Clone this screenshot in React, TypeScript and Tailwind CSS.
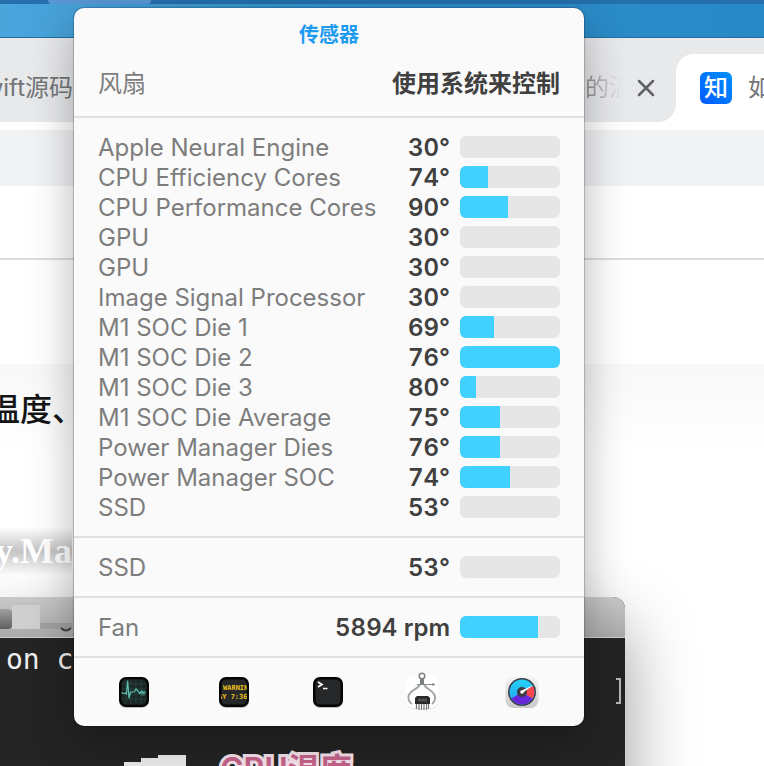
import React from "react";

type Reading = { name: string; value: string; level: number };

const sensors: Reading[] = [
  { name: "Apple Neural Engine", value: "30°", level: 0 },
  { name: "CPU Efficiency Cores", value: "74°", level: 28 },
  { name: "CPU Performance Cores", value: "90°", level: 48 },
  { name: "GPU", value: "30°", level: 0 },
  { name: "GPU", value: "30°", level: 0 },
  { name: "Image Signal Processor", value: "30°", level: 0 },
  { name: "M1 SOC Die 1", value: "69°", level: 34 },
  { name: "M1 SOC Die 2", value: "76°", level: 100 },
  { name: "M1 SOC Die 3", value: "80°", level: 16 },
  { name: "M1 SOC Die Average", value: "75°", level: 40 },
  { name: "Power Manager Dies", value: "76°", level: 40 },
  { name: "Power Manager SOC", value: "74°", level: 50 },
  { name: "SSD", value: "53°", level: 0 },
];

function Row({ name, value, level }: Reading) {
  return (
    <li className="flex h-[30px] items-center text-2xl whitespace-nowrap">
      <span className="flex-1 pt-0.5 text-[#7d7d7d]">{name}</span>
      <span className="pt-0.5 font-semibold text-[#404040] tabular-nums">{value}</span>
      <div
        role="meter"
        aria-label={name}
        aria-valuenow={level}
        aria-valuemin={0}
        aria-valuemax={100}
        className="ml-2.5 h-[22px] w-[100px] shrink-0 overflow-hidden rounded-md bg-[#e6e6e6]"
      >
        <div className="h-full bg-[#41d1ff]" style={{ width: `${level}%` }} />
      </div>
    </li>
  );
}

function Section({ rows }: { rows: Reading[] }) {
  return (
    <ul className="border-t-2 border-[#e0e0e0] px-6 py-3.5">
      {rows.map((r, i) => (
        <Row key={i} {...r} />
      ))}
    </ul>
  );
}

function AppButton({ label, children }: { label: string; children: React.ReactNode }) {
  return (
    <button type="button" aria-label={label} className="block size-9">
      <svg viewBox="0 0 36 36" className="size-9 overflow-visible">
        {children}
      </svg>
    </button>
  );
}

function DarkTile() {
  return (
    <>
      <rect x="3" y="4" width="30" height="30" rx="7" fill="#000" opacity=".25" />
      <rect x="3" y="3" width="30" height="30" rx="7" fill="#050505" />
      <rect x="5.5" y="5.5" width="25" height="25" rx="4.5" fill="#262728" />
    </>
  );
}

function ActivityIcon() {
  return (
    <AppButton label="Activity Monitor">
      <DarkTile />
      <rect x="5.5" y="5.5" width="25" height="25" rx="4.5" fill="#1b2625" />
      <path
        d="M10 6v24M15 6v24M20 6v24M25 6v24M6 10h24M6 15h24M6 20h24M6 25h24"
        stroke="#28463f"
        strokeWidth=".8"
      />
      <circle cx="27" cy="19" r="3" fill="#55c9b5" opacity=".35" />
      <path
        d="M5.500 18.500l2 1 2-.5 1 1 1.200-13 1.300 17 1.500-6h3.500l2-3 2 2 1.500 2.500 2-2 1.500 1.500 2-1"
        fill="none"
        stroke="#5fc4b4"
        strokeWidth="1.200"
        strokeLinejoin="round"
      />
    </AppButton>
  );
}

function ConsoleIcon() {
  return (
    <AppButton label="Console">
      <DarkTile />
      <svg x="5" y="5" width="26" height="26" viewBox="0 0 26 26">
        <g
          fill="#f0c31c"
          fontSize="7"
          fontWeight="700"
          style={{ fontFamily: '"DejaVu Sans Mono", monospace' }}
        >
          <text x="2" y="11">WARNIN</text>
          <text x="-3" y="20">AY 7:36</text>
        </g>
      </svg>
    </AppButton>
  );
}

function TerminalIcon() {
  return (
    <AppButton label="Terminal">
      <DarkTile />
      <path d="M8 8l4 2.500-4 2.500M13 14.500h4.500" fill="none" stroke="#fff" strokeWidth="1.700" />
    </AppButton>
  );
}

function SystemInfoIcon() {
  return (
    <AppButton label="System Information">
      <rect x="2" y="3" width="32" height="32" rx="8" fill="#000" opacity=".08" />
      <rect x="2" y="2" width="32" height="32" rx="8" fill="#fff" />
      <path
        d="M16 10c-1 5-10 6-11.500 12-.5 3 .5 6 3.500 8M20 10c1 5 9 6 11 12 .5 3-.5 6-3 8"
        fill="none"
        stroke="#a3a7a7"
        strokeWidth="2"
      />
      <circle cx="18" cy="2" r="2.800" fill="none" stroke="#808484" strokeWidth="1.500" />
      <path d="M16 4.500h4v6h-4z" fill="#7c8080" />
      <path d="M13 10.500h18M29 9v3" stroke="#858989" strokeWidth="1.200" />
      <path d="M13 22h11l2 2v6H11v-6z" fill="#292929" />
      <path d="M14 24.500h9v3h-9z" fill="#505050" />
      <path d="M12.500 30v5M15 30v6M17.500 30v6M20 30v6M22.500 30v6M24.500 30v5" stroke="#777" strokeWidth="1.200" />
    </AppButton>
  );
}

function GaugeIcon() {
  return (
    <AppButton label="iStat Menus">
      <defs>
        <linearGradient id="tile" x2="0" y2="1">
          <stop stopColor="#f6f6f6" />
          <stop offset="1" stopColor="#c9c9c9" />
        </linearGradient>
        <linearGradient id="sky" x2="0" y2="1">
          <stop stopColor="#22d3f7" />
          <stop offset="1" stopColor="#2d9df2" />
        </linearGradient>
      </defs>
      <rect x="1.500" y="2" width="33" height="32" rx="8" fill="url(#tile)" />
      <circle cx="18" cy="18" r="14" fill="#3a3d49" />
      <circle cx="18" cy="18" r="12.500" fill="url(#sky)" />
      <path d="M18 18L7.500 24.500A12.500 12.500 0 0 0 28.500 24.500z" fill="#6a26dc" />
      <path d="M18 18L29 12A12.500 12.500 0 0 1 28.500 24.500z" fill="#fb4650" />
      <circle cx="18" cy="18" r="5" fill="#3b3c41" />
      <path d="M17.200 16.800L29.500 11l-11 8z" fill="#fff" />
      <circle cx="18" cy="18" r="1.800" fill="#fff" />
    </AppButton>
  );
}

function SensorPanel() {
  return (
    <section
      aria-label="传感器"
      className="absolute top-2 left-[74px] w-[510px] rounded-[10px] bg-[#fafafa] shadow-[0_0_1px_1px_rgba(0,0,0,0.2),0_16px_44px_rgba(0,0,0,0.3)]"
    >
      <h1 className="pt-3 text-center text-xl leading-[30px] font-bold text-[#1c9bf1]">传感器</h1>
      <div className="mt-4 mb-3.5 flex h-9 items-center justify-between px-6 text-2xl">
        <span className="text-[#7d7d7d]">风扇</span>
        <button type="button" className="font-bold text-[#404040]">
          使用系统来控制
        </button>
      </div>
      <Section rows={sensors} />
      <Section rows={[{ name: "SSD", value: "53°", level: 0 }]} />
      <Section rows={[{ name: "Fan", value: "5894 rpm", level: 78 }]} />
      <nav className="flex h-[70px] items-center justify-between border-t-2 border-[#e0e0e0] pr-11 pl-[42px]">
        <ActivityIcon />
        <div className="flex gap-[58px]">
          <ConsoleIcon />
          <TerminalIcon />
          <SystemInfoIcon />
        </div>
        <GaugeIcon />
      </nav>
    </section>
  );
}

function TabStrip() {
  return (
    <div className="flex h-[84px] bg-white text-2xl whitespace-nowrap text-[#747577]">
      <div className="flex flex-1 items-center rounded-br-[18px] bg-[#e8e9eb] pt-4">
        <span className="flex w-[73px] justify-end overflow-hidden">Swift源码</span>
        <span className="ml-auto w-9 overflow-hidden bg-linear-to-r from-[#88898b] to-[#e8e9eb] bg-clip-text text-transparent">
          的温
        </span>
        <button type="button" aria-label="关闭标签页" className="mr-5 ml-[15px] block size-5">
          <svg viewBox="0 0 20 20" className="size-5">
            <path d="M3 3l14 14M17 3L3 17" stroke="#606164" strokeWidth="2.500" strokeLinecap="round" />
          </svg>
        </button>
      </div>
      <div className="w-[88px] bg-[#e8e9eb]">
        <div className="mt-4 flex h-[68px] items-center gap-4 overflow-hidden rounded-tl-[18px] bg-white pl-6">
          <span className="flex size-8 shrink-0 items-center justify-center rounded-md bg-linear-to-tr from-[#0058ff] to-[#0090ff] font-medium text-white">
            知
          </span>
          <span>如</span>
        </div>
      </div>
    </div>
  );
}

function Article() {
  return (
    <main className="bg-white">
      <div className="h-[74px] border-b-2 border-[#dddddd]" />
      <div className="h-[104px]" />
      <div className="h-[233px] bg-linear-to-b from-[#f8f8f8] to-white to-40% pt-[22px]">
        <p className="flex w-[84px] justify-end overflow-hidden text-[32px] leading-[48px] font-medium whitespace-nowrap text-[#151515]">
          温度、
        </p>
        <p
          className="mt-[93px] flex w-[72px] justify-end overflow-hidden bg-linear-to-b from-white via-[#c4c4c4] to-white text-4xl leading-[48px] font-bold text-white"
          style={{ fontFamily: '"Liberation Serif", serif' }}
        >
          y.Ma
        </p>
      </div>
      <div className="mr-[139px] h-[240px] rounded-tr-xl bg-[#242424] shadow-[0_30px_70px_rgba(0,0,0,0.4)]">
        <div className="flex h-[41px] items-end rounded-tr-xl border-b border-[#d0d0d0] bg-linear-to-b from-[#c8c8c8] to-[#aaaaaa] pb-2">
          <div className="h-5 w-3 rounded-r-sm bg-linear-to-b from-[#a0a0a0] to-[#606060]" />
          <div className="h-6 w-7 bg-[#cfcfcf]" />
          <div className="h-1.5 w-8 bg-[#a0a0a0]" />
          <svg viewBox="0 0 12 6" className="-mb-1 -ml-3 h-1.5 w-3">
            <path d="M1 1q5 5 10 0" fill="none" stroke="#444" strokeWidth="2" />
          </svg>
        </div>
        <div
          className="flex h-[112px] justify-between pt-1.5 pl-1.5 text-[28px] leading-[32px] whitespace-pre text-[#eeeeee]"
          style={{ fontFamily: '"DejaVu Sans Mono", monospace' }}
        >
          <span>on c</span>
          <span className="mt-[34px] mr-1 h-[26px] w-[5px] border-2 border-l-0 border-[#b5b5b5]" />
        </div>
        <div className="flex pl-[124px]">
          <svg viewBox="0 0 62 20" className="mt-[5px] h-5 w-[62px]">
            <path d="M0 20V7h17V3h17V0h28v20z" fill="#ededed" />
          </svg>
          <span className="ml-[34px] text-[32px] leading-10 font-semibold whitespace-nowrap text-[#c7648b] [-webkit-text-stroke:6px_#f8e6ee] [paint-order:stroke_fill]">
            CPU温度
          </span>
        </div>
      </div>
    </main>
  );
}

export default function App() {
  return (
    <div
      className="relative h-screen overflow-hidden bg-white"
      style={{ fontFamily: 'Inter, "Noto Sans CJK SC", sans-serif' }}
    >
      <header className="h-[38px] border-b border-[#256d9f] bg-linear-to-r from-[#4ba5dc] via-[#2f8fcb] to-[#2789c6]">
        <div className="h-1 bg-[#246fac] pl-12">
          <div className="h-1 w-[103px] rounded-b-sm bg-[#5797d3]" />
        </div>
      </header>
      <TabStrip />
      <div className="border-t-8 border-white">
        <div className="h-14 bg-[#f1f2f4]" />
      </div>
      <Article />
      <SensorPanel />
    </div>
  );
}
